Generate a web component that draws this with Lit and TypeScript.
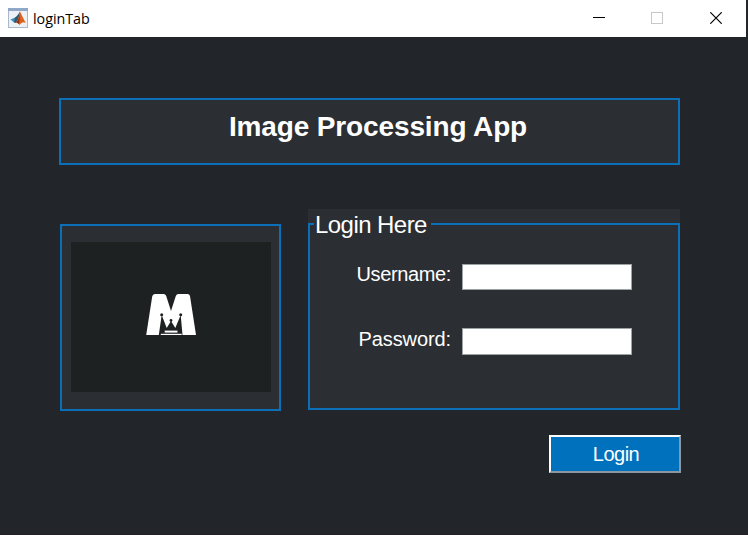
import { LitElement, html, css } from "lit";
import { customElement } from "lit/decorators.js";

@customElement("title-bar")
class TitleBar extends LitElement {
  static styles = css`
    :host { display: flex; align-items: center; width: 746px; height: 37px; background: #fff; color: #000; }
    .logo { width: 20px; height: 20px; margin: 0 5px 1px 8px; }
    .name { flex: 1; font: 14.3px/20px "Open Sans", "Noto Sans", sans-serif; letter-spacing: -0.02px; }
    .controls { display: flex; padding-right: 1px; }
    .ctl { box-sizing: border-box; width: 58.5px; height: 37px; padding-bottom: 1px; display: flex; align-items: center; justify-content: center; }
    .controls svg { display: block; width: 12px; height: 12px; }
  `;
  render() {
    return html`
      <svg class="logo" viewBox="0 0 20 20">
        <rect x=".5" y=".5" width="19" height="19" fill="#edf0f4" stroke="#a9b8cc" />
        <rect x="0" y="0" width="20" height="3" fill="#8fa8c8" />
        <path d="M2.500 11.500 7 9.500 9 12 6 14.500Z" fill="#3d8fc0" />
        <path d="M7 9.500Q9 8.500 12 3.500L11 12 8 15 6 14.500Z" fill="#2f5873" />
        <path d="M12 3.500Q14 8 17.800 15Q14 13 11.500 17Q10 14 8 14.500Q11 10 12 3.500Z" fill="#dc611c" />
        <path d="M12 3.500Q12 10 8.500 14.500L11 16Q12 10 12 3.500Z" fill="#8d2f1b" />
      </svg>
      <span class="name">loginTab</span>
      <div class="controls">
        <div class="ctl"><svg viewBox="0 0 12 12"><path d="M0 5.500H12" stroke="#000" /></svg></div>
        <div class="ctl"><svg viewBox="0 0 12 12"><rect x=".5" y=".5" width="11" height="11" fill="none" stroke="#c8c8c8" /></svg></div>
        <div class="ctl"><svg viewBox="0 0 12 12"><path d="M.3.3 11.700 11.700M11.700.3.3 11.700" stroke="#000" stroke-width="1.200" /></svg></div>
      </div>
    `;
  }
}

@customElement("brand-panel")
class BrandPanel extends LitElement {
  static styles = css`
    :host { display: block; box-sizing: border-box; width: 221px; height: 187px; padding: 16px 8px 17px 9px; border: 2px solid #0c70b8; background: #2b2e32; }
    .frame { width: 200px; height: 150px; background: #1e2122; display: flex; align-items: center; justify-content: center; }
    svg { display: block; width: 52px; height: 44px; margin-bottom: 4px; }
  `;
  render() {
    return html`
      <div class="frame">
        <svg viewBox="0 0 52 44">
          <path d="M10 1H18.500Q20.500 1 21.200 3L26 18 30.800 3Q31.500 1 33.500 1H42.500Q44.500 1 45 3L51 42H37.500L35.700 22 30.300 35 26 28 21.700 35 16.700 22 13.800 42H1.200L7.200 3.500Q7.600 1 10 1Z" fill="#fff" />
          <g fill="#1e2122"><circle cx="16.700" cy="21.700" r="1.500" /><circle cx="26" cy="27.500" r="1.400" /><circle cx="35.700" cy="21.700" r="1.500" /></g>
          <path d="M19.700 38.600H32.500" stroke="#fff" stroke-width="2" />
          <path d="M15.800 41.400H36.700" stroke="#fff" stroke-width="1.200" />
        </svg>
      </div>
    `;
  }
}

@customElement("login-panel")
class LoginPanel extends LitElement {
  static styles = css`
    :host { display: block; position: relative; box-sizing: border-box; width: 372px; height: 201px; padding-top: 14px; background: #2b2e32; }
    .body { box-sizing: border-box; height: 187px; border: 2px solid #0c70b8; padding: 39px 46px 0 0; }
    .legend { position: absolute; left: 6px; top: 2px; width: 117px; height: 28px; background: #2b2e32; color: #fff; font: 24px/28px "Liberation Sans", Arial, sans-serif; letter-spacing: -0.55px; white-space: nowrap; text-indent: 1px; }
    .row { display: flex; justify-content: flex-end; height: 26px; margin-bottom: 38px; }
    .label { color: #fff; font: 20px/22px "Liberation Sans", Arial, sans-serif; letter-spacing: -0.1px; margin-right: 11px; }
    .user { letter-spacing: -0.36px; line-height: 20px; }
    .field { box-sizing: border-box; width: 170px; height: 26px; border: 1px solid #9da2a5; border-radius: 0; padding: 2px 4px; margin: 0; background: #fff; outline: none; }
    .tall { height: 27px; }
  `;
  render() {
    return html`
      <div class="body">
        <div class="row"><label class="label user" for="u">Username:</label><input class="field" id="u" /></div>
        <div class="row"><label class="label" for="p">Password:</label><input class="field tall" id="p" type="password" /></div>
      </div>
      <span class="legend">Login Here</span>
    `;
  }
}

@customElement("app-root")
class AppRoot extends LitElement {
  static styles = css`
    :host { display: block; box-sizing: border-box; width: 748px; height: 535px; background: #222529; overflow: hidden; border-bottom: 1px solid #211f26; }
    .content { padding: 61px 67px 0 59px; }
    .header { box-sizing: border-box; width: 621px; height: 67px; border: 2px solid #0c70b8; background: #2b2e32; color: #fff; text-align: center; padding: 10px 0 0 17px; font: bold 28px/34px "Liberation Sans", Arial, sans-serif; letter-spacing: -0.13px; margin: 0; }
    .columns { display: flex; align-items: flex-end; justify-content: space-between; padding-left: 1px; margin: 44px 0 0; width: 620px; height: 202px; }
    .right { height: 202px; }
    .action { display: flex; justify-content: flex-end; width: 622px; margin-top: 24px; }
    .login { box-sizing: border-box; width: 132px; height: 38px; padding: 0 0 0 2px; border: 2px solid; border-color: #fff #8b98a2 #8b98a2 #fff; border-radius: 0; background: #0072bd; color: #fff; font: 20px/32px "Liberation Sans", Arial, sans-serif; letter-spacing: -0.5px; }
  `;
  render() {
    return html`
      <title-bar></title-bar>
      <main class="content">
        <h1 class="header">Image Processing App</h1>
        <div class="columns">
          <brand-panel></brand-panel>
          <div class="right"><login-panel></login-panel></div>
        </div>
        <div class="action"><button class="login">Login</button></div>
      </main>
    `;
  }
}
